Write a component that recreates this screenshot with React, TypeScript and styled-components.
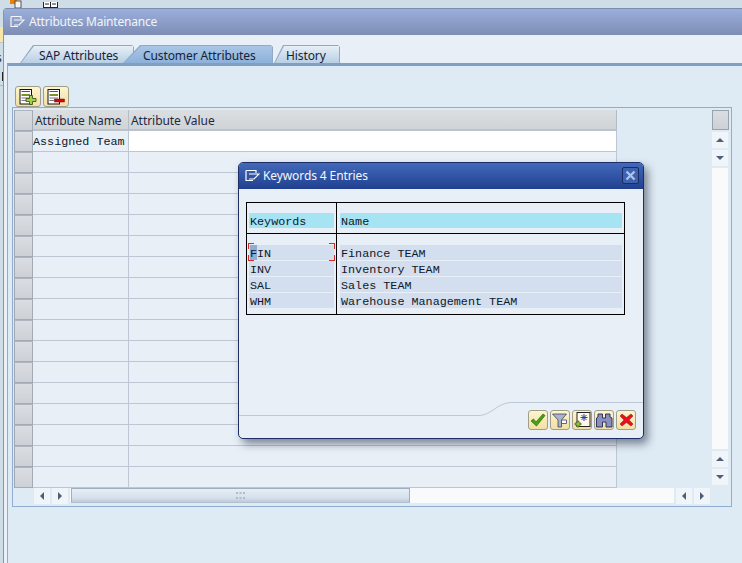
import React from "react";
import styled, { createGlobalStyle } from "styled-components";

const GlobalStyle = createGlobalStyle`
	html, body {
		margin: 0;
		padding: 0;
		overflow: hidden;
		background: #cfdde7;
	}
	* {
		box-sizing: border-box;
	}
`;

const uiFont = `"Noto Sans", "Liberation Sans", Arial, sans-serif`;
const monoFont = `"Liberation Mono", "Courier New", monospace`;

const rowCount = 17;
const keywords = [
	["FIN", "Finance TEAM"],
	["INV", "Inventory TEAM"],
	["SAL", "Sales TEAM"],
	["WHM", "Warehouse Management TEAM"],
];

const Page = styled.div`
	position: relative;
	width: 742px;
	height: 563px;
	overflow: hidden;
	display: flex;
	flex-direction: column;
`;

const BehindBar = styled.div`
	height: 8px;
	flex: none;
	display: flex;
	align-items: flex-end;
	padding-left: 10px;
	gap: 21px;
	overflow: hidden;
`;

const BehindBody = styled.div`
	flex: 1;
	display: flex;
	min-height: 0;
`;

const BehindEdge = styled.div`
	width: 3px;
	flex: none;
	display: flex;
	flex-direction: column;
	padding-top: 19px;
	overflow: hidden;
`;

const EdgeYellow = styled.div`
	height: 16px;
	flex: none;
	background: #f7e6a8;
	border-bottom: 1px solid #b9c4cf;
`;

const EdgeText = styled.div`
	margin: 9px 0 0 -4px;
	height: 12px;
	flex: none;
	font: 12px/12px ${uiFont};
	color: #1c2b44;
`;

const EdgeTick = styled.div`
	width: 1px;
	height: 9px;
	flex: none;
	margin: 8px 0 4px 2px;
	background: #222;
`;

const EdgeLine = styled.div`
	height: 1px;
	flex: none;
	background: #a9b6c2;
`;

const Window = styled.div`
	flex: 1;
	display: flex;
	flex-direction: column;
	min-width: 0;
	background: #e8eff7;
	border-left: 1px solid #8494b4;
	border-top: 1px solid #7c8cb0;
	border-top-left-radius: 4px;
`;

const TitleBar = styled.div`
	height: 26px;
	flex: none;
	display: flex;
	align-items: center;
	gap: 4px;
	padding: 0 0 1px 6px;
	background: linear-gradient(#9bafdc, #7d8db4);
	color: #f2f5fb;
	font: 12px ${uiFont};
	letter-spacing: -0.2px;
`;

const TabStrip = styled.div`
	height: 28px;
	flex: none;
	display: flex;
	align-items: flex-end;
	padding-left: 16px;
`;

const Tab = styled.div<{ $active?: boolean; $width: number; $slant: number; $gap: number; $inset: number }>`
	position: relative;
	width: ${(p) => p.$width}px;
	height: 18px;
	margin-right: ${(p) => p.$gap}px;
	padding: 2px 0 0 ${(p) => p.$inset}px;
	display: flex;
	align-items: center;
	font: 12px ${uiFont};
	letter-spacing: -0.1px;
	color: #15233a;
	white-space: nowrap;
	z-index: ${(p) => (p.$active ? 2 : 1)};
	background: #8fa9c6;
	clip-path: polygon(${(p) => p.$slant}px 0, calc(100% - 2px) 0, 100% 2px, 100% 100%, 0 100%);

	&::before {
		content: "";
		position: absolute;
		inset: 1px 1px 0 1px;
		background: ${(p) =>
			p.$active ? "linear-gradient(#a9c6e6, #8db1da)" : "linear-gradient(#e6eff7, #b8cfe5)"};
		clip-path: polygon(${(p) => p.$slant}px 0, 100% 0, 100% 100%, 0 100%);
	}

	span {
		position: relative;
	}
`;

const Panel = styled.div`
	flex: 1;
	margin-left: 3px;
	display: flex;
	flex-direction: column;
	background: #deeaf4;
	border-top: 3px solid #7f9fc4;
	border-left: 1px solid #8fadd0;
	padding: 20px 10px 0 4px;
	min-height: 0;
`;

const Toolbar = styled.div`
	display: flex;
	gap: 2px;
	padding-left: 3px;
	height: 21px;
	flex: none;
`;

const ToolButton = styled.div<{ $w?: number; $h?: number }>`
	width: ${(p) => p.$w ?? 26}px;
	height: ${(p) => p.$h ?? 21}px;
	display: flex;
	align-items: center;
	justify-content: center;
	background: linear-gradient(#fdf5cf, #f2dfa3);
	border: 1px solid #a09e8a;
	border-radius: 3px;
`;

const TableFrame = styled.div`
	width: 720px;
	height: 400px;
	flex: none;
	border: 1px solid #8fadd0;
	padding: 2px 2px 0 1px;
	display: grid;
	grid-template-columns: 698px 17px;
	grid-template-rows: 375px 20px;
`;

const Grid = styled.div`
	display: grid;
	grid-template-columns: 19px 96px 488px;
	grid-auto-rows: 21px;
	align-content: start;
`;

const HeaderCell = styled.div`
	height: 21px;
	display: flex;
	align-items: center;
	padding: 1px 0 0 2px;
	font: 12px ${uiFont};
	letter-spacing: -0.05px;
	color: #1c2b44;
	background: linear-gradient(#dcdfe2, #d0d4d7);
	border-right: 1px solid #b4bcc6;
	border-bottom: 2px solid #b9c3cf;
`;

const SelectorCell = styled.div`
	height: 21px;
	background: linear-gradient(#dadde1, #cdd1d6);
	border: 1px solid #a3abb5;
	border-left-color: #9ea7b2;
	border-top-color: #aeb5be;
`;

const Cell = styled.div<{ $input?: boolean }>`
	height: 21px;
	display: flex;
	align-items: center;
	padding-top: 1px;
	font: 11.75px ${monoFont};
	color: #101828;
	white-space: nowrap;
	background: ${(p) => (p.$input ? "#ffffff" : "#e8eff7")};
	border-right: 1px solid #bcc7d3;
	border-bottom: 1px solid #bcc7d3;
`;

const VScroll = styled.div`
	display: flex;
	flex-direction: column;
	gap: 2px;
`;

const ScrollCorner = styled.div`
	height: 20px;
	flex: none;
	background: linear-gradient(#dadde1, #cdd1d6);
	border: 1px solid #98a2ad;
`;

const ArrowButton = styled.div`
	flex: none;
	width: 16px;
	height: 16px;
	display: flex;
	align-items: center;
	justify-content: center;
	background: #f0f5fa;
`;

const Track = styled.div`
	flex: 1;
	width: 16px;
	background: #f8fafc;
`;

const Arrow = styled.div<{ $dir: "up" | "down" | "left" | "right" }>`
	width: 0;
	height: 0;
	border-style: solid;
	border-color: transparent;
	${(p) =>
		p.$dir === "up"
			? "border-width: 0 4px 4px 4px; border-bottom-color: #4d6178;"
			: p.$dir === "down"
				? "border-width: 4px 4px 0 4px; border-top-color: #4d6178;"
				: p.$dir === "left"
					? "border-width: 4px 4px 4px 0; border-right-color: #4d6178;"
					: "border-width: 4px 0 4px 4px; border-left-color: #4d6178;"}
`;

const HScroll = styled.div`
	grid-column: 1 / 3;
	display: flex;
	align-items: flex-start;
	padding: 3px 0 0 20px;
	gap: 2px;
`;

const HRail = styled.div`
	width: 604px;
	height: 15px;
	padding-left: 1px;
	background: #f8fafc;
`;

const HThumb = styled.div`
	width: 339px;
	height: 15px;
	display: flex;
	align-items: center;
	justify-content: center;
	background: linear-gradient(#e6eef5, #d4e0ea 70%, #bccad8);
	border: 1px solid #9fb0c2;
	border-bottom-color: #b4c2d0;
`;

const Dialog = styled.div`
	position: absolute;
	left: 238px;
	top: 162px;
	width: 406px;
	height: 277px;
	display: flex;
	flex-direction: column;
	background: #e8eff7;
	border: 1px solid #1d2f66;
	border-radius: 5px;
	box-shadow: 4px 5px 8px rgba(40, 50, 70, 0.55);
	overflow: hidden;
`;

const DialogTitle = styled.div`
	height: 26px;
	flex: none;
	display: flex;
	align-items: center;
	gap: 3px;
	padding: 0 4px 1px 6px;
	background: linear-gradient(#4269ba, #21408f);
	color: #f4f7fd;
	font: 12px ${uiFont};
	letter-spacing: -0.1px;
`;

const CloseButton = styled.div`
	margin-left: auto;
	width: 17px;
	height: 17px;
	display: flex;
	align-items: center;
	justify-content: center;
	border: 1px solid #1a2c63;
	border-radius: 2px;
	background: #3f61ae;
`;

const DialogBody = styled.div`
	flex: 1;
	position: relative;
	display: flex;
	flex-direction: column;
	padding: 13px 0 0 7px;
	min-height: 0;
`;

const KeywordTable = styled.div`
	width: 379px;
	height: 113px;
	flex: none;
	border: 1px solid #000;
	display: grid;
	grid-template-columns: 90px 1fr;
	grid-template-rows: 31px 1fr;
	background: #e8eff7;
`;

const ListColumn = styled.div<{ $head?: boolean; $first?: boolean }>`
	display: flex;
	flex-direction: column;
	padding: ${(p) => (p.$head ? "10px" : "11px")} 2px 0 ${(p) => (p.$first ? "2px" : "3px")};
	gap: 1px;
	border-right: ${(p) => (p.$first ? "1px solid #000" : "0")};
	border-bottom: ${(p) => (p.$head ? "1px solid #000" : "0")};
`;

const ListCell = styled.div<{ $head?: boolean }>`
	position: relative;
	height: 15px;
	flex: none;
	display: flex;
	align-items: center;
	padding: 2px 0 0 1px;
	font: 11.75px ${monoFont};
	color: #101828;
	white-space: pre;
	background: ${(p) => (p.$head ? "#a6e4f4" : "#d3deee")};
`;

const FocusChar = styled.span`
	align-self: stretch;
	margin-top: -2px;
	padding-top: 2px;
	display: flex;
	align-items: center;
	background: #8eaed4;
`;

const Corner = styled.i<{ $v: "top" | "bottom"; $h: "left" | "right" }>`
	position: absolute;
	${(p) => (p.$v === "top" ? "top: -2px;" : "bottom: -1px;")}
	${(p) => p.$h}: -1px;
	width: 6px;
	height: 6px;
	border-style: solid;
	border-color: #d42a2a;
	border-width: ${(p) => (p.$v === "top" ? "1px" : "0")} ${(p) => (p.$h === "right" ? "1px" : "0")}
		${(p) => (p.$v === "bottom" ? "1px" : "0")} ${(p) => (p.$h === "left" ? "1px" : "0")};
`;

const Curve = styled.svg`
	position: absolute;
	left: 0;
	bottom: 0;
	width: 404px;
	height: 40px;
`;

const DialogButtons = styled.div`
	position: absolute;
	right: 7px;
	bottom: 8px;
	display: flex;
	gap: 2px;
`;

function WindowIcon({ color }: { color: string }) {
	return (
		<svg width="15" height="13" viewBox="0 0 15 13" fill="none" stroke={color} strokeWidth="1.2">
			<path d="M1 1.5H11V4M1 1.5V11.5H8M4 5H14L9 10H4" />
		</svg>
	);
}

function SheetIcon({ mark }: { mark: "plus" | "minus" }) {
	return (
		<svg width="18" height="16" viewBox="0 0 18 16">
			<rect x="1" y="0.5" width="11.5" height="14.5" fill="#fff" stroke="#111" />
			<rect x="2.5" y="2" width="8.5" height="1" fill="#555" />
			<rect x="2.5" y="5" width="8.5" height="2" fill="#7f8f2a" />
			<rect x="2.5" y="8.5" width="8.5" height="1" fill="#777" />
			<rect x="2.5" y="11" width="5" height="1" fill="#777" />
			{mark === "plus" ? (
				<path d="M10.5 6.5h3v3h3.5v3h-3.5v3h-3v-3H7v-3h3.5z" fill="#a4d044" stroke="#33491a" strokeWidth="0.8" />
			) : (
				<rect x="7.5" y="10" width="10" height="3" fill="#e00010" stroke="#7a0a10" strokeWidth="0.5" />
			)}
		</svg>
	);
}

function CheckIcon() {
	return (
		<svg width="16" height="14" viewBox="0 0 16 14">
			<path d="M1 8l2.5-2 2.5 3L13 1l2 1.5L6.5 13z" fill="#49a012" stroke="#2c6a0a" strokeWidth="0.7" />
		</svg>
	);
}

function FilterIcon() {
	return (
		<svg width="16" height="15" viewBox="0 0 16 15">
			<path d="M0.5 1h14L9.5 7v7H6V7z" fill="#aab3c8" stroke="#3d4660" strokeWidth="0.8" />
			<path d="M9.5 7h5v3.5h-5z" fill="#fff" stroke="#3d4660" strokeWidth="0.8" />
		</svg>
	);
}

function FindNextIcon() {
	return (
		<svg width="17" height="16" viewBox="0 0 17 16">
			<rect x="3" y="0.5" width="13" height="14" fill="#fff8e8" stroke="#222" />
			<path d="M10 2v7M6.5 5.5h7M7.5 3l5 5M12.5 3l-5 5" stroke="#2b3e9c" strokeWidth="1" />
			<path d="M3 9h2v2h2v2H5v2H3v-2H1v-2h2z" fill="#8fc53a" stroke="#33491a" strokeWidth="0.6" />
		</svg>
	);
}

function BinocularsIcon() {
	return (
		<svg width="17" height="15" viewBox="0 0 17 15">
			<path
				d="M2 1h4.5v4h3V1H14v3l2 1v9h-6V9H6.5v5h-6V5l1.5-1z"
				fill="#8a8fc0"
				stroke="#23264f"
				strokeWidth="0.9"
			/>
		</svg>
	);
}

function CancelIcon() {
	return (
		<svg width="15" height="14" viewBox="0 0 15 14">
			<path
				d="M3 1l4.5 3.5L12 1l2 2-4 4 4 4-2 2-4.5-3.5L3 13l-2-2 4-4-4-4z"
				fill="#e8101c"
				stroke="#8a1016"
				strokeWidth="0.5"
			/>
		</svg>
	);
}

export default function App() {
	return (
		<Page>
			<GlobalStyle />
			<BehindBar>
				<svg width="12" height="8" viewBox="0 0 12 8">
					<rect x="0" y="0" width="7" height="4" fill="#e8820c" />
					<rect x="5" y="1" width="6" height="7" fill="#f4f4f4" stroke="#333" strokeWidth="0.8" />
				</svg>
				<svg width="15" height="6" viewBox="0 0 15 6">
					<rect x="0.5" y="-2" width="14" height="7.5" fill="#fff" stroke="#222" />
					<path d="M7.5 0v6M2 2h4M9 2h4" stroke="#222" />
				</svg>
			</BehindBar>
			<BehindBody>
				<BehindEdge>
					<EdgeYellow />
					<EdgeText>s</EdgeText>
					<EdgeTick />
					<EdgeLine />
				</BehindEdge>
				<Window>
					<TitleBar>
						<WindowIcon color="#f4f6fb" />
						Attributes Maintenance
					</TitleBar>
					<TabStrip>
						<Tab $width={114} $slant={13} $gap={-11} $inset={19}>
							<span>SAP Attributes</span>
						</Tab>
						<Tab $width={150} $slant={17} $gap={1} $inset={20} $active>
							<span>Customer Attributes</span>
						</Tab>
						<Tab $width={66} $slant={9} $gap={0} $inset={12}>
							<span>History</span>
						</Tab>
					</TabStrip>
					<Panel>
						<Toolbar>
							<ToolButton>
								<SheetIcon mark="plus" />
							</ToolButton>
							<ToolButton>
								<SheetIcon mark="minus" />
							</ToolButton>
						</Toolbar>
						<TableFrame>
							<Grid>
								<SelectorCell />
								<HeaderCell>Attribute Name</HeaderCell>
								<HeaderCell>Attribute Value</HeaderCell>
								{Array.from({ length: rowCount }, (_, i) => (
									<React.Fragment key={i}>
										<SelectorCell />
										<Cell>{i === 0 ? "Assigned Team" : ""}</Cell>
										<Cell $input={i === 0} />
									</React.Fragment>
								))}
							</Grid>
							<VScroll>
								<ScrollCorner />
								<ArrowButton>
									<Arrow $dir="up" />
								</ArrowButton>
								<ArrowButton>
									<Arrow $dir="down" />
								</ArrowButton>
								<Track />
								<ArrowButton>
									<Arrow $dir="up" />
								</ArrowButton>
								<ArrowButton>
									<Arrow $dir="down" />
								</ArrowButton>
							</VScroll>
							<HScroll>
								<ArrowButton>
									<Arrow $dir="left" />
								</ArrowButton>
								<ArrowButton>
									<Arrow $dir="right" />
								</ArrowButton>
								<HRail>
									<HThumb>
										<svg width="9" height="7" viewBox="0 0 9 7" fill="#aebccb">
											<path d="M0 0h2v2H0zM3.5 0h2v2h-2zM7 0h2v2H7zM0 5h2v2H0zM3.5 5h2v2h-2zM7 5h2v2H7z" />
										</svg>
									</HThumb>
								</HRail>
								<ArrowButton>
									<Arrow $dir="left" />
								</ArrowButton>
								<ArrowButton>
									<Arrow $dir="right" />
								</ArrowButton>
							</HScroll>
						</TableFrame>
					</Panel>
				</Window>
			</BehindBody>

			<Dialog>
				<DialogTitle>
					<WindowIcon color="#ffffff" />
					Keywords 4 Entries
					<CloseButton>
						<svg width="11" height="11" viewBox="0 0 11 11">
							<path d="M1.5 1.5l8 8M9.5 1.5l-8 8" stroke="#a9c4f0" strokeWidth="2.4" />
						</svg>
					</CloseButton>
				</DialogTitle>
				<DialogBody>
					<Curve viewBox="0 0 404 40" fill="none">
						<path d="M0 17.5H240C252 17.5 258 5 272 4.5H404" stroke="#bcc8d8" strokeWidth="1" />
					</Curve>
					<KeywordTable>
						<ListColumn $first $head>
							<ListCell $head>Keywords</ListCell>
						</ListColumn>
						<ListColumn $head>
							<ListCell $head>Name</ListCell>
						</ListColumn>
						<ListColumn $first>
							{keywords.map(([key], i) => (
								<ListCell key={key}>
									{i === 0 ? (
										<>
											<FocusChar>F</FocusChar>IN
											<Corner $v="top" $h="left" />
											<Corner $v="top" $h="right" />
											<Corner $v="bottom" $h="left" />
											<Corner $v="bottom" $h="right" />
										</>
									) : (
										key
									)}
								</ListCell>
							))}
						</ListColumn>
						<ListColumn>
							{keywords.map(([key, name]) => (
								<ListCell key={key}>{name}</ListCell>
							))}
						</ListColumn>
					</KeywordTable>
					<DialogButtons>
						<ToolButton $w={20} $h={20}>
							<CheckIcon />
						</ToolButton>
						<ToolButton $w={20} $h={20}>
							<FilterIcon />
						</ToolButton>
						<ToolButton $w={20} $h={20}>
							<FindNextIcon />
						</ToolButton>
						<ToolButton $w={20} $h={20}>
							<BinocularsIcon />
						</ToolButton>
						<ToolButton $w={20} $h={20}>
							<CancelIcon />
						</ToolButton>
					</DialogButtons>
				</DialogBody>
			</Dialog>
		</Page>
	);
}
